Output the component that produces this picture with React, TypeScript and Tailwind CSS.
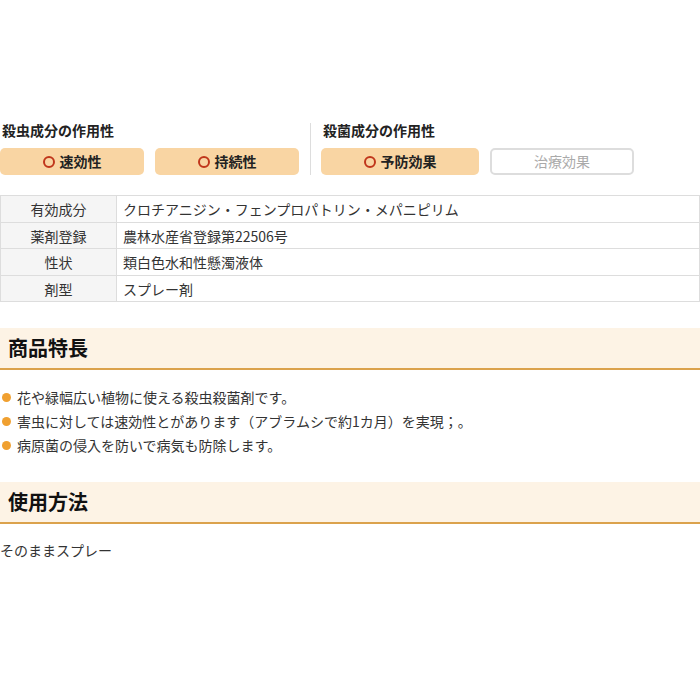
import React from "react";

const font = { fontFamily: '"Noto Sans CJK JP", "Noto Sans", sans-serif' };

function Circle() {
  return (
    <span className="inline-block w-[12px] h-[12px] rounded-full border-2 border-[#c0361b] mr-[5px]" />
  );
}

function OnBtn({ label, w }: { label: string; w: string }) {
  return (
    <div className={`${w} h-[27px] rounded-[5px] bg-[#f9d5a3] flex items-center justify-center text-[14px] font-bold text-[#222]`}>
      <Circle />
      {label}
    </div>
  );
}

const rows = [
  ["有効成分", "クロチアニジン・フェンプロパトリン・メパニピリム", "h-[27px]"],
  ["薬剤登録", "農林水産省登録第22506号", "h-[26px]"],
  ["性状", "類白色水和性懸濁液体", "h-[27px]"],
  ["剤型", "スプレー剤", "h-[26px]"],
];

export default function App() {
  return (
    <div className="w-[700px] h-[700px] bg-white text-[#333]" style={font}>
      <div className="pt-[119px] flex">
        <div className="w-[310px] flex flex-col">
          <div className="h-[22px] pl-[2px] text-[14px] font-bold text-[#222] leading-[22px]">殺虫成分の作用性</div>
          <div className="mt-[7px] flex gap-[11px]">
            <OnBtn label="速効性" w="w-[144px]" />
            <OnBtn label="持続性" w="w-[144px]" />
          </div>
        </div>
        <div className="w-px bg-[#ddd] h-[52px] mt-[4px]" />
        <div className="pl-[10px] flex flex-col">
          <div className="h-[22px] pl-[2px] text-[14px] font-bold text-[#222] leading-[22px]">殺菌成分の作用性</div>
          <div className="mt-[7px] flex gap-[11px]">
            <OnBtn label="予防効果" w="w-[158px]" />
            <div className="w-[144px] h-[27px] rounded-[5px] border-2 border-[#ddd] bg-white flex items-center justify-center text-[14px] text-[#aaa]">
              治療効果
            </div>
          </div>
        </div>
      </div>

      <table className="mt-[20px] w-[700px] border-collapse text-[14px]">
        <tbody>
          {rows.map(([k, v, h]) => (
            <tr key={k} className={h}>
              <td className="w-[116px] border border-[#ddd] bg-[#f5f5f5] text-center text-[#333] p-0 leading-none">{k}</td>
              <td className="border border-[#ddd] pl-[6px] text-[#333] p-0 leading-none">{v}</td>
            </tr>
          ))}
        </tbody>
      </table>

      <div className="mt-[26px] h-[42px] bg-[#fdf3e5] border-b-2 border-[#dba24c] flex items-center pl-[8px] text-[20px] font-bold text-[#111]">
        商品特長
      </div>
      <div className="mt-[15px] flex flex-col text-[14px] text-[#333]">
        {[
          "花や緑幅広い植物に使える殺虫殺菌剤です。",
          "害虫に対しては速効性とがあります（アブラムシで約1カ月）を実現；。",
          "病原菌の侵入を防いで病気も防除します。",
        ].map((t) => (
          <div key={t} className="h-[24px] flex items-center">
            <span className="w-[9px] h-[9px] rounded-full bg-[#f0a030] ml-[2px] mr-[6px]" />
            {t}
          </div>
        ))}
      </div>

      <div className="mt-[25px] h-[42px] bg-[#fdf3e5] border-b-2 border-[#dba24c] flex items-center pl-[8px] text-[20px] font-bold text-[#111]">
        使用方法
      </div>
      <div className="mt-[16px] text-[14px] text-[#333]">そのままスプレー</div>
    </div>
  );
}
